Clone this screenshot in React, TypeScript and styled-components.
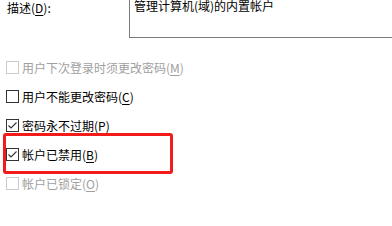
import React from "react";
import styled, { createGlobalStyle } from "styled-components";

const GlobalStyle = createGlobalStyle`
  html, body {
    margin: 0;
    padding: 0;
    background: #ffffff;
  }
  body {
    font-family: "Noto Sans CJK SC", "Microsoft YaHei UI", sans-serif;
    font-size: 12px;
    color: #000;
  }
`;

const Page = styled.div`
  position: relative;
  width: 392px;
  height: 226px;
  overflow: hidden;
  background: #fff;
`;

const TopRow = styled.div`
  display: grid;
  grid-template-columns: 129px 1fr;
  align-items: start;
`;

const Label = styled.div`
  padding-left: 7px;
  line-height: 16px;
  white-space: nowrap;
`;

const TextBox = styled.div`
  height: 37px;
  width: 300px;
  border-left: 1px solid #7a7a7a;
  border-bottom: 1px solid #7a7a7a;
  padding-left: 4px;
  line-height: 12px;
  white-space: nowrap;
`;

const List = styled.div`
  display: flex;
  flex-direction: column;
  gap: 13px;
  margin-top: 21px;
  padding-left: 6px;
`;

const Row = styled.label<{ $disabled?: boolean }>`
  display: flex;
  align-items: center;
  gap: 3px;
  height: 16px;
  color: ${(p) => (p.$disabled ? "#a0a0a0" : "#000")};
  white-space: nowrap;
`;

const Box = styled.span<{ $disabled?: boolean }>`
  display: inline-flex;
  align-items: center;
  justify-content: center;
  box-sizing: border-box;
  width: 13px;
  height: 13px;
  border: 1px solid ${(p) => (p.$disabled ? "#cccccc" : "#333333")};
  background: #fff;
`;

const Key = styled.span`
  text-decoration: underline;
  text-underline-offset: 2px;
`;

const Highlight = styled.div`
  position: absolute;
  left: 3px;
  top: 133px;
  width: 170px;
  height: 41px;
  box-sizing: border-box;
  border: 3px solid #f31a1a;
  border-radius: 3px;
  pointer-events: none;
`;

const Check = () => (
  <svg width="11" height="11" viewBox="0 0 11 11">
    <polyline points="1.5,5.5 4,8 9.5,2.5" fill="none" stroke="#333" strokeWidth="1.1" />
  </svg>
);

interface OptionProps {
  text: string;
  hotkey: string;
  checked?: boolean;
  disabled?: boolean;
}

const Option: React.FC<OptionProps> = ({ text, hotkey, checked, disabled }) => (
  <Row $disabled={disabled}>
    <Box $disabled={disabled}>{checked && <Check />}</Box>
    <span>
      {text}(<Key>{hotkey}</Key>)
    </span>
  </Row>
);

export default function App() {
  return (
    <Page>
      <GlobalStyle />
      <TopRow>
        <Label>
          描述(<Key>D</Key>):
        </Label>
        <TextBox>管理计算机(域)的内置帐户</TextBox>
      </TopRow>
      <List>
        <Option text="用户下次登录时须更改密码" hotkey="M" disabled />
        <Option text="用户不能更改密码" hotkey="C" />
        <Option text="密码永不过期" hotkey="P" checked />
        <Option text="帐户已禁用" hotkey="B" checked />
        <Option text="帐户已锁定" hotkey="O" disabled />
      </List>
      <Highlight />
    </Page>
  );
}
